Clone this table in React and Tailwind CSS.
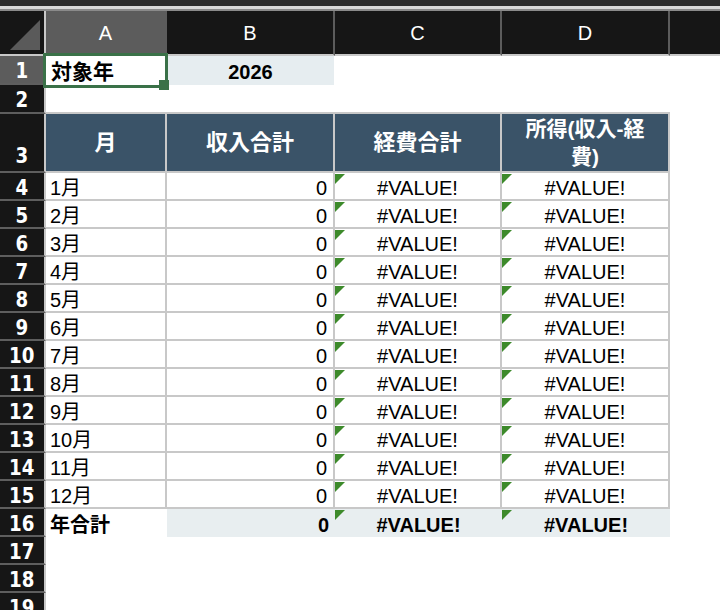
import React from "react";

const months = ["1月","2月","3月","4月","5月","6月","7月","8月","9月","10月","11月","12月"];

function Tri() {
  return (
    <div className="absolute left-0 top-[1px] h-0 w-0 border-t-[10px] border-r-[10px] border-t-[#3d8a2b] border-r-transparent" />
  );
}

function RowHead({ n, selected, bottom }) {
  return (
    <div
      className={
        "flex justify-center border-r-2 border-b-2 border-r-[#c8c8c8] border-b-[#5e5e5e] text-white font-bold text-[22px] leading-none font-['Liberation_Sans_Narrow','DejaVu_Sans_Condensed',sans-serif] " +
        (selected ? "bg-[#5c5c5c] " : "bg-[#161616] ") +
        (bottom ? "items-end pb-[4px]" : "items-center pt-[3px]")
      }
    >
      <span className="inline-block scale-x-[0.92]">{n}</span>
    </div>
  );
}

export default function App() {
  const cellFont = "font-['Liberation_Sans','Noto_Sans_CJK_JP',sans-serif] text-[20px] leading-none text-black";
  return (
    <div className="h-[610px] w-[720px] overflow-hidden bg-white">
      <div className="h-[6px] bg-[#2b2b2b]" />
      <div className="h-[3px] bg-[#d8d8d8]" />
      <div className="h-[2px] bg-[#8a8a8a]" />
      <div className="relative">
        <div className={"grid grid-cols-[46px_121px_168px_167px_168px_1fr] grid-rows-[45px_29px_29px_59px_repeat(16,28px)] " + cellFont}>
          {/* header row */}
          <div className="relative border-r-2 border-b-2 border-[#c8c8c8] bg-[#161616]">
            <div className="absolute left-[10px] top-[9px] h-0 w-0 border-l-[30px] border-b-[30px] border-l-transparent border-b-[#5a5a5a]" />
          </div>
          <div className="flex items-center justify-center border-r-2 border-b-2 border-r-[#5c5c5c] border-b-[#c8c8c8] bg-[#5c5c5c] text-white font-['Liberation_Sans',sans-serif] text-[20px]">A</div>
          <div className="flex items-center justify-center border-r-2 border-b-2 border-r-[#5c5c5c] border-b-[#c8c8c8] bg-[#161616] text-white font-['Liberation_Sans',sans-serif] text-[20px]">B</div>
          <div className="flex items-center justify-center border-r-2 border-b-2 border-r-[#5c5c5c] border-b-[#c8c8c8] bg-[#161616] text-white font-['Liberation_Sans',sans-serif] text-[20px]">C</div>
          <div className="flex items-center justify-center border-r-2 border-b-2 border-r-[#5c5c5c] border-b-[#c8c8c8] bg-[#161616] text-white font-['Liberation_Sans',sans-serif] text-[20px]">D</div>
          <div className="border-b-2 border-b-[#c8c8c8] bg-[#161616]" />

          {/* row 1 */}
          <RowHead n={1} selected />
          <div className="flex items-center pl-[5px] pt-[2px] font-bold text-[21px]">対象年</div>
          <div className="flex items-center justify-center bg-[#e6edf0] pt-[2px] font-bold mr-[1px]">2026</div>
          <div />
          <div />
          <div />

          {/* row 2 */}
          <RowHead n={2} />
          <div className="border-b-2 border-b-[#c8c8c8]" />
          <div className="border-b-2 border-b-[#c8c8c8]" />
          <div className="border-b-2 border-b-[#c8c8c8]" />
          <div className="border-b-2 border-b-[#c8c8c8]" />
          <div />

          {/* row 3 header */}
          <RowHead n={3} bottom />
          <div className="flex items-center justify-center border-r-2 border-b-2 border-[#c8c8c8] bg-[#3a5368] text-white font-bold text-[22px]">月</div>
          <div className="flex items-center justify-center border-r-2 border-b-2 border-[#c8c8c8] bg-[#3a5368] text-white font-bold text-[22px]">収入合計</div>
          <div className="flex items-center justify-center border-r-2 border-b-2 border-[#c8c8c8] bg-[#3a5368] text-white font-bold text-[22px]">経費合計</div>
          <div className="flex items-center justify-center border-r-2 border-b-2 border-[#c8c8c8] bg-[#3a5368] text-center text-white font-bold text-[21px] leading-[28px]">
            <span>所得(収入-経<br />費)</span>
          </div>
          <div />

          {months.map((m, i) => (
            <React.Fragment key={m}>
              <RowHead n={i + 4} />
              <div className="flex items-center border-r-2 border-b-2 border-[#c8c8c8] pl-[4px] pt-[3px]">{m}</div>
              <div className="flex items-center justify-end border-r-2 border-b-2 border-[#c8c8c8] pr-[6px] pt-[3px]">0</div>
              <div className="relative flex items-center justify-center border-r-2 border-b-2 border-[#c8c8c8] pt-[3px]">
                <Tri />
                #VALUE!
              </div>
              <div className="relative flex items-center justify-center border-r-2 border-b-2 border-[#c8c8c8] pt-[3px]">
                <Tri />
                #VALUE!
              </div>
              <div />
            </React.Fragment>
          ))}

          {/* row 16 */}
          <RowHead n={16} />
          <div className="flex items-center pl-[4px] pt-[3px] font-bold">年合計</div>
          <div className="flex items-center justify-end bg-[#e8eef0] pr-[6px] pt-[3px] font-bold">0</div>
          <div className="relative flex items-center justify-center bg-[#e8eef0] pt-[3px] font-bold">
            <Tri />
            #VALUE!
          </div>
          <div className="relative flex items-center justify-center bg-[#e8eef0] pt-[3px] font-bold">
            <Tri />
            #VALUE!
          </div>
          <div />

          {[17, 18, 19].map((n) => (
            <React.Fragment key={n}>
              <RowHead n={n} />
              <div />
              <div />
              <div />
              <div />
              <div />
            </React.Fragment>
          ))}
        </div>

        {/* selection */}
        <div className="pointer-events-none absolute left-[43px] top-[42px] h-[35px] w-[125px] border-[3px] border-[#3a7148]" />
        <div className="pointer-events-none absolute left-[159px] top-[69px] h-[10px] w-[10px] bg-[#3a7148]" />
      </div>
    </div>
  );
}
